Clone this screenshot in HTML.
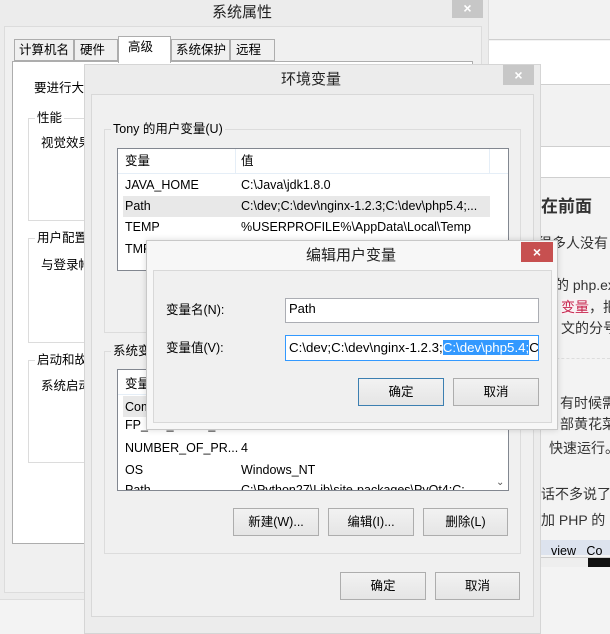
<!DOCTYPE html>
<html><head><meta charset="utf-8"><style>
*{margin:0;padding:0;box-sizing:border-box}
body{width:610px;height:623px;overflow:hidden;position:relative;background:#f3f3f3;font-family:"Liberation Sans","Noto Sans CJK SC",sans-serif;font-size:12.5px;color:#000}
.a{position:absolute}
.t{position:absolute;white-space:nowrap;line-height:14px}
.btn{position:absolute;border:1px solid #adadad;background:linear-gradient(#f2f2f2,#e5e5e5);text-align:center;line-height:26px}
.x{position:absolute;color:#fff;text-align:center;font-size:14px;font-weight:bold;line-height:20px}
.grp{position:absolute;border:1px solid #dcdcdc}
.lbl{position:absolute;background:#f0f0f0;padding:0 2px;line-height:14px;white-space:nowrap}
</style></head><body>
<!-- right blog -->
<div class="a" style="left:489px;top:0;width:121px;height:40px;background:#f2f2f2;border-bottom:1px solid #cfcfcf"></div>
<div class="a" style="left:489px;top:41px;width:121px;height:44px;background:#fff;border-bottom:1px solid #cfcfcf"></div>
<div class="a" style="left:489px;top:86px;width:121px;height:61px;background:#f2f2f2;border-bottom:1px solid #cfcfcf"></div>
<div class="a" style="left:489px;top:147px;width:121px;height:31px;background:#fff;border-bottom:1px solid #cfcfcf"></div>
<div class="t" style="left:541px;top:197px;font-size:17px;font-weight:bold;color:#333;line-height:20px">在前面</div>
<div class="t" style="left:538px;top:236px;font-size:14px;color:#333">很多人没有</div>
<div class="t" style="left:555px;top:278px;font-size:14px;color:#333">的 php.exe</div>
<div class="t" style="left:561px;top:300px;font-size:14px;color:#333"><span style="color:#c7254e;background:#f9f2f4">变量</span>，把</div>
<div class="t" style="left:561px;top:321px;font-size:14px;color:#333">文的分号。</div>
<div class="a" style="left:541px;top:358px;width:69px;border-top:1px dashed #ddd"></div>
<div class="t" style="left:560px;top:396px;font-size:14px;color:#333">有时候需要</div>
<div class="t" style="left:560px;top:417px;font-size:14px;color:#333">部黄花菜都</div>
<div class="t" style="left:549px;top:441px;font-size:14px;color:#333">快速运行。</div>
<div class="t" style="left:541px;top:487px;font-size:14px;color:#333">话不多说了。</div>
<div class="t" style="left:541px;top:513px;font-size:14px;color:#333">加 PHP 的 bin</div>
<div class="a" style="left:541px;top:540px;width:69px;height:15px;background:#dde3ee;overflow:hidden"><span class="t" style="left:10px;top:4px">view &nbsp; Co</span></div>
<div class="a" style="left:541px;top:557px;width:69px;height:10px;background:#eee;border-top:1px solid #ccc"></div>
<div class="a" style="left:588px;top:558px;width:22px;height:9px;background:#111"></div>

<!-- system properties -->
<div class="a" style="left:0;top:0;width:489px;height:600px;background:#ececec;border-right:1px solid #ddd;border-bottom:1px solid #ddd"></div>
<div class="t" style="left:212px;top:4px;font-size:15px;line-height:18px;color:#222">系统属性</div>
<div class="a" style="left:452px;top:0;width:31px;height:18px;background:#c7c7c7"></div><div class="x" style="left:452px;top:-2px;width:31px">×</div>
<div class="a" style="left:4px;top:26px;width:478px;height:567px;background:#f0f0f0;border:1px solid #dcdcdc"></div>
<div class="a" style="left:12px;top:61px;width:461px;height:483px;background:#fff;border:1px solid #adadad"></div>
<div class="a" style="left:14px;top:39px;width:60px;height:22px;background:#f0f0f0;border:1px solid #adadad"></div><div class="t" style="left:19px;top:43px">计算机名</div>
<div class="a" style="left:74px;top:39px;width:44px;height:22px;background:#f0f0f0;border:1px solid #adadad"></div><div class="t" style="left:80px;top:43px">硬件</div>
<div class="a" style="left:171px;top:39px;width:59px;height:22px;background:#f0f0f0;border:1px solid #adadad"></div><div class="t" style="left:176px;top:43px">系统保护</div>
<div class="a" style="left:230px;top:39px;width:45px;height:22px;background:#f0f0f0;border:1px solid #adadad"></div><div class="t" style="left:236px;top:43px">远程</div>
<div class="a" style="left:118px;top:36px;width:53px;height:27px;background:#fff;border:1px solid #adadad;border-bottom:none"></div><div class="t" style="left:128px;top:40px">高级</div>
<div class="t" style="left:34px;top:81px">要进行大多数更改</div>
<div class="a" style="left:28px;top:118px;width:200px;height:103px;border:1px solid #dcdcdc"></div><div class="t" style="left:35px;top:111px;background:#fff;padding:0 2px">性能</div>
<div class="t" style="left:41px;top:136px">视觉效果</div>
<div class="a" style="left:28px;top:238px;width:200px;height:105px;border:1px solid #dcdcdc"></div><div class="t" style="left:35px;top:231px;background:#fff;padding:0 2px">用户配置</div>
<div class="t" style="left:41px;top:258px">与登录帐户</div>
<div class="a" style="left:28px;top:360px;width:200px;height:103px;border:1px solid #dcdcdc"></div><div class="t" style="left:35px;top:353px;background:#fff;padding:0 2px">启动和故障</div>
<div class="t" style="left:41px;top:379px">系统启动</div>

<!-- environment variables -->
<div class="a" style="left:84px;top:64px;width:457px;height:570px;background:#ececec;border:1px solid #d5d5d5"></div>
<div class="t" style="left:281px;top:71px;font-size:15px;line-height:18px;color:#222">环境变量</div>
<div class="a" style="left:503px;top:65px;width:31px;height:20px;background:#c7c7c7"></div><div class="x" style="left:503px;top:65px;width:31px">×</div>
<div class="a" style="left:91px;top:94px;width:443px;height:523px;background:#f0f0f0;border:1px solid #d8d8d8"></div>
<div class="grp" style="left:104px;top:129px;width:417px;height:204px"></div><div class="lbl" style="left:111px;top:122px">Tony 的用户变量(U)</div>
<div class="a" style="left:117px;top:148px;width:392px;height:123px;background:#fff;border:1px solid #828790;overflow:hidden">
 <div class="a" style="left:0;top:0;width:390px;height:25px;border-bottom:1px solid #e5eef7"></div>
 <div class="a" style="left:117px;top:0;height:25px;border-left:1px solid #e5eef7"></div>
 <div class="a" style="left:371px;top:0;height:25px;border-left:1px solid #e5eef7"></div>
 <div class="t" style="left:7px;top:5px">变量</div><div class="t" style="left:123px;top:5px">值</div>
 <div class="a" style="left:5px;top:47px;width:367px;height:21px;background:#e8e8e8"></div>
 <div class="t" style="left:7px;top:29px">JAVA_HOME</div><div class="t" style="left:123px;top:29px">C:\Java\jdk1.8.0</div>
 <div class="t" style="left:7px;top:50px">Path</div><div class="t" style="left:123px;top:50px">C:\dev;C:\dev\nginx-1.2.3;C:\dev\php5.4;...</div>
 <div class="t" style="left:7px;top:71px">TEMP</div><div class="t" style="left:123px;top:71px">%USERPROFILE%\AppData\Local\Temp</div>
 <div class="t" style="left:7px;top:93px">TMP</div>
</div>
<div class="grp" style="left:104px;top:351px;width:417px;height:203px"></div><div class="lbl" style="left:111px;top:344px">系统变量(S)</div>
<div class="a" style="left:117px;top:369px;width:392px;height:122px;background:#fff;border:1px solid #828790;overflow:hidden">
 <div class="a" style="left:0;top:0;width:390px;height:25px;border-bottom:1px solid #e5eef7"></div>
 <div class="t" style="left:7px;top:7px">变量</div>
 <div class="a" style="left:5px;top:26px;width:367px;height:21px;background:#e8e8e8"></div>
 <div class="t" style="left:7px;top:30px">ComSpec</div>
 <div class="t" style="left:7px;top:48px">FP_NO_HOST_CH...</div><div class="t" style="left:123px;top:48px">NO</div>
 <div class="t" style="left:7px;top:71px">NUMBER_OF_PR...</div><div class="t" style="left:123px;top:71px">4</div>
 <div class="t" style="left:7px;top:93px">OS</div><div class="t" style="left:123px;top:93px">Windows_NT</div>
 <div class="t" style="left:7px;top:113px">Path</div><div class="t" style="left:123px;top:113px">C:\Python27\Lib\site-packages\PyQt4;C:</div>
 <div class="t" style="left:378px;top:106px;color:#555;font-size:10px">&#8964;</div>
</div>
<div class="btn" style="left:233px;top:508px;width:86px;height:28px">新建(W)...</div>
<div class="btn" style="left:328px;top:508px;width:86px;height:28px">编辑(I)...</div>
<div class="btn" style="left:423px;top:508px;width:85px;height:28px">删除(L)</div>
<div class="btn" style="left:340px;top:572px;width:86px;height:28px">确定</div>
<div class="btn" style="left:435px;top:572px;width:85px;height:28px">取消</div>

<!-- edit dialog -->
<div class="a" style="left:146px;top:240px;width:412px;height:190px;background:#f7f7f7;border:1px solid #c8c8c8;box-shadow:0 0 6px rgba(0,0,0,.15)"></div>
<div class="t" style="left:306px;top:247px;font-size:15px;line-height:18px;color:#222">编辑用户变量</div>
<div class="a" style="left:521px;top:242px;width:32px;height:20px;background:#c75050"></div><div class="x" style="left:521px;top:242px;width:32px">×</div>
<div class="a" style="left:153px;top:270px;width:399px;height:153px;background:#f0f0f0;border:1px solid #d8d8d8"></div>
<div class="t" style="left:166px;top:303px">变量名(N):</div>
<div class="a" style="left:285px;top:298px;width:254px;height:25px;background:#fff;border:1px solid #abadb3"></div>
<div class="t" style="left:289px;top:302px;font-size:13px">Path</div>
<div class="t" style="left:166px;top:341px">变量值(V):</div>
<div class="a" style="left:285px;top:335px;width:254px;height:26px;background:#fff;border:1px solid #3399ff;overflow:hidden">
 <div class="t" style="left:3px;top:5px;font-size:13.3px">C:\dev;C:\dev\nginx-1.2.3;<span style="background:#3399ff;color:#fff">C:\dev\php5.4;</span>C:\</div>
</div>
<div class="btn" style="left:358px;top:378px;width:86px;height:28px;border-color:#3c7fb1">确定</div>
<div class="btn" style="left:453px;top:378px;width:86px;height:28px">取消</div>
</body></html>
